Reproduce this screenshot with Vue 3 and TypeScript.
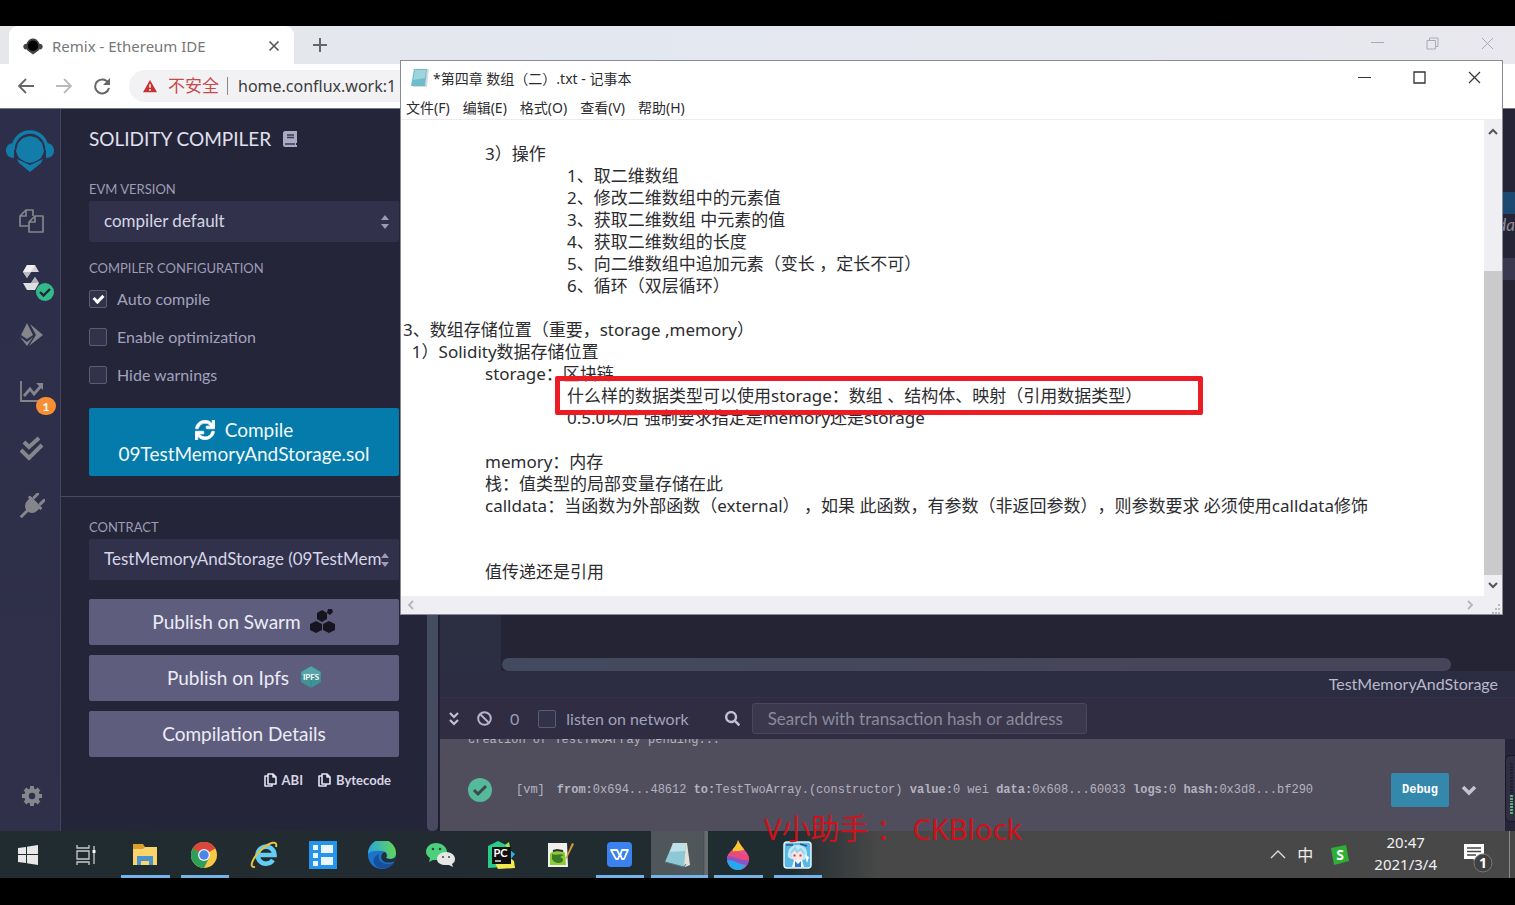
<script setup lang="ts">
import { ref } from 'vue'

interface CompilerOption { id: string; label: string; on: boolean }
interface TaskItem { id: string; label: string; open?: boolean; active?: boolean }
interface LogPart { key: string; value: string }

const options = ref<CompilerOption[]>([
  { id: 'auto', label: 'Auto compile', on: true },
  { id: 'optimize', label: 'Enable optimization', on: false },
  { id: 'hide', label: 'Hide warnings', on: false },
])

const evm = ref('compiler default')
const contract = ref('TestMemoryAndStorage (09TestMemoryAndStorage.sol)')
const url = ref('home.conflux.work:1')
const listen = ref(false)
const query = ref('')

const log: LogPart[] = [
  { key: 'from:', value: '0x694...48612' },
  { key: 'to:', value: 'TestTwoArray.(constructor)' },
  { key: 'value:', value: '0 wei' },
  { key: 'data:', value: '0x608...60033' },
  { key: 'logs:', value: '0' },
  { key: 'hash:', value: '0x3d8...bf290' },
]

const menus = ['文件(F)', '编辑(E)', '格式(O)', '查看(V)', '帮助(H)']

const note = ref([
  '',
  '\t3）操作',
  '\t\t1、取二维数组',
  '\t\t2、修改二维数组中的元素值',
  '\t\t3、获取二维数组 中元素的值',
  '\t\t4、获取二维数组的长度',
  '\t\t5、向二维数组中追加元素（变长 ，定长不可）',
  '\t\t6、循环（双层循环）',
  '',
  '3、数组存储位置（重要，storage ,memory）',
  '  1）Solidity数据存储位置',
  '\tstorage：区块链',
  '\t\t什么样的数据类型可以使用storage：数组 、结构体、映射（引用数据类型）',
  '\t\t0.5.0以后 强制要求指定是memory还是storage',
  '',
  '\tmemory：内存',
  '\t栈：值类型的局部变量存储在此',
  '\tcalldata：当函数为外部函数（external） ，如果 此函数，有参数（非返回参数），则参数要求 必须使用calldata修饰',
  '',
  '',
  '\t值传递还是引用',
].join('\n'))

const tasks: TaskItem[] = [
  { id: 'start', label: '开始' },
  { id: 'view', label: '任务视图' },
  { id: 'files', label: '文件资源管理器', open: true },
  { id: 'chrome', label: 'Chrome', open: true },
  { id: 'ie', label: 'Internet Explorer' },
  { id: 'tiles', label: '控制台' },
  { id: 'edge', label: 'Edge' },
  { id: 'wechat', label: '微信' },
  { id: 'pycharm', label: 'PyCharm' },
  { id: 'npp', label: 'Notepad++' },
  { id: 'wps', label: 'WPS', open: true },
  { id: 'notepad', label: '记事本', open: true, active: true },
  { id: 'paint', label: '画图', open: true },
  { id: 'avatar', label: '直播', open: true },
]
</script>

<template>
  <div class="stage">
    <div class="desktop">
      <header class="tabs">
        <div class="tab">
          <svg class="tab-logo" viewBox="0 0 48 42" aria-hidden="true">
            <path d="M8 14C12 4 19 1 24 1s12 3 16 13c5 0 8 3 8 7s-3 8-8 7c-1 2-3 3-4 4L24 41 12 32c-1-1-3-2-4-4-5 1-8-3-8-7s3-7 8-7z" fill="#444" />
            <circle cx="24" cy="19" r="13" fill="#000" />
          </svg>
          <span class="tab-title">Remix - Ethereum IDE</span>
          <button class="bare" aria-label="关闭标签页">
            <svg width="12" height="12" viewBox="0 0 12 12"><path d="M1.500 1.500l9 9M10.500 1.500l-9 9" stroke="#555" stroke-width="1.600" /></svg>
          </button>
        </div>
        <button class="bare new-tab" aria-label="新标签页">
          <svg width="16" height="16" viewBox="0 0 16 16"><path d="M8 1v14M1 8h14" stroke="#666" stroke-width="2" /></svg>
        </button>
        <div class="win-buttons pale">
          <button class="bare" aria-label="最小化"><svg width="13" height="13" viewBox="0 0 13 13"><path d="M0 5.500h13" stroke="currentColor" /></svg></button>
          <button class="bare" aria-label="还原"><svg width="13" height="13" viewBox="0 0 13 13" fill="none" stroke="currentColor"><path d="M1 3.500h8.500V12H1zM3.500 3V1H12v8.500H9.500" /></svg></button>
          <button class="bare" aria-label="关闭"><svg width="13" height="13" viewBox="0 0 13 13"><path d="M1 1l11 11M12 1L1 12" stroke="currentColor" /></svg></button>
        </div>
      </header>

      <div class="address">
        <button class="bare" aria-label="后退"><svg width="18" height="18" viewBox="0 0 18 18" fill="none" stroke="#666" stroke-width="1.800"><path d="M17 9H2M9 2L2 9l7 7" /></svg></button>
        <button class="bare" aria-label="前进"><svg width="18" height="18" viewBox="0 0 18 18" fill="none" stroke="#bbb" stroke-width="1.800"><path d="M1 9h15M9 2l7 7-7 7" /></svg></button>
        <button class="bare" aria-label="刷新"><svg width="18" height="18" viewBox="0 0 18 18"><path d="M15 5.500A7 7 0 1 0 16 11" fill="none" stroke="#666" stroke-width="2" /><path d="M17 1v7h-7z" fill="#666" /></svg></button>
        <div class="pill">
          <svg width="14" height="14" viewBox="0 0 16 14"><path d="M8 0l8 14H0z" fill="#c9302f" /><path d="M8 5v4M8 10.500v2" stroke="#fff" stroke-width="1.800" /></svg>
          <span class="unsafe">不安全</span>
          <input v-model="url" class="url" aria-label="地址" />
        </div>
      </div>

      <main class="remix">
        <nav class="rail" aria-label="Plugins">
          <button class="bare rail-logo" aria-label="Home">
            <svg width="48" height="42" viewBox="0 0 48 42">
              <path d="M7 20C7 10 14 2 24 2s17 8 17 18" fill="none" stroke="#127da9" stroke-width="3.500" />
              <path d="M8 13v15C3 28 0 25 0 20.500S3 13 8 13zM40 13v15c5 0 8-3 8-7.500S45 13 40 13z" fill="#127da9" />
              <path d="M24 6l4 1 3 1 3 3 2 2 1 4 1 4-1 3-2 4-3 2-4 2-4 1-4-1-4-2-3-2-2-4-1-3 1-4 1-4 2-2 3-3 3-1z" fill="#127da9" />
              <path d="M11 29l13 6 13-6-2 4-11 9-11-9z" fill="#127da9" />
            </svg>
          </button>
          <button class="bare slot" aria-label="Files">
            <svg width="26" height="26" viewBox="0 0 26 26" fill="none" stroke="#85858c" stroke-width="1.700" stroke-linejoin="round"><path d="M10 18H1V8l6-6h7v6M7 2v6H1M10 14l6-6h8v16H10zM16 8v6h-6" /></svg>
          </button>
          <button class="bare slot" aria-label="Compiler">
            <svg width="26" height="26" viewBox="0 0 26 26">
              <path d="M8 0h8l4 7h-8l-4 6-4-6z" fill="#d2d2d8" /><path d="M8 0h8l-4 7H4z" fill="#efeff2" /><path d="M4 7h8l-4 6z" fill="#b9b9c2" />
              <path d="M16 25H8l-4-7h8l4-6 4 6z" fill="#dedee3" /><path d="M12 18h8l-4-6z" fill="#b0b0ba" />
            </svg>
            <span class="badge ok"><svg width="12" height="10" viewBox="0 0 12 10"><path d="M1 5l3.500 3.500L11 2" fill="none" stroke="#23243a" stroke-width="2.400" /></svg></span>
          </button>
          <button class="bare slot" aria-label="Deploy">
            <svg width="26" height="26" viewBox="0 0 26 26" fill="#85858c"><path d="M8 1l6 12-6 4-6-4zM1 15l7 5 6-5-6 9zM11 2l13 11-14 11 7-11z" /></svg>
          </button>
          <button class="bare slot" aria-label="Analysis">
            <svg width="26" height="26" viewBox="0 0 26 26" fill="none" stroke="#85858c"><path d="M2 2v20h22" stroke-width="1.800" /><path d="M5 17l6-7 4 5 7-8" stroke-width="2.800" /><path d="M17 4h7v7z" fill="#85858c" stroke="none" /></svg>
            <span class="badge warn">1</span>
          </button>
          <button class="bare slot" aria-label="Unit tests">
            <svg width="26" height="26" viewBox="0 0 26 26" fill="none" stroke="#85858c" stroke-width="4"><path d="M5 6l5 5L20 2M2 14l8 8L23 9" /></svg>
          </button>
          <button class="bare slot" aria-label="Plugin manager">
            <svg width="26" height="26" viewBox="0 0 26 26"><g transform="rotate(45 13 13)" fill="#85858c"><rect x="7" y="-1" width="3" height="8" rx="1.500" /><rect x="16" y="-1" width="3" height="8" rx="1.500" /><rect x="4" y="7" width="18" height="3" rx="1" /><path d="M6 9h14v4a7 7 0 0 1-14 0z" /><rect x="11.500" y="19" width="3" height="10" /></g></svg>
          </button>
          <button class="bare slot gear" aria-label="Settings">
            <svg width="22" height="22" viewBox="0 0 22 22" fill="none" stroke="#85858c"><circle cx="11" cy="11" r="5.500" stroke-width="4.500" /><path d="M11 1v4M11 17v4M1 11h4M17 11h4M4 4l3 3M15 15l3 3M4 18l3-3M15 7l3-3" stroke-width="4" /></svg>
          </button>
        </nav>

        <section class="panel">
          <h1 class="title">SOLIDITY COMPILER
            <svg width="14" height="16" viewBox="0 0 14 16"><path d="M2 0h12v12h-1v2h1v2H2c-1 0-2-1-2-2V2c0-1 1-2 2-2z" fill="#aaaac6" /><path d="M4 4h7M4 6.500h7M2 13h10" stroke="#3a3a52" stroke-width="1.300" /></svg>
          </h1>
          <label class="caption first" for="evm">EVM VERSION</label>
          <div class="select-wrap">
            <select id="evm" v-model="evm"><option>compiler default</option></select>
            <svg class="arrows" width="8" height="14" viewBox="0 0 8 14"><path d="M4 0l4 5H0zM4 14l4-5H0z" fill="#9a9ab4" /></svg>
          </div>
          <div class="caption second">COMPILER CONFIGURATION</div>
          <div class="checks">
            <label v-for="o in options" :key="o.id" class="check"><input v-model="o.on" type="checkbox" class="tick" />{{ o.label }}</label>
          </div>
          <button class="compile">
            <span class="compile-top">
              <svg width="20" height="20" viewBox="0 0 512 512"><path fill="#fff" d="M440.650 12.570l4 82.770A247.160 247.160 0 0 0 255.830 8C134.730 8 33.910 94.920 12.290 209.820A12 12 0 0 0 24.090 224h49.050a12 12 0 0 0 11.670-9.260 175.910 175.910 0 0 1 317-56.940l-101.460-4.860a12 12 0 0 0-12.570 12v47.410a12 12 0 0 0 12 12H500a12 12 0 0 0 12-12V12a12 12 0 0 0-12-12h-47.370a12 12 0 0 0-11.980 12.570zM255.830 432a175.610 175.610 0 0 1-146-77.800l101.800 4.870a12 12 0 0 0 12.570-12v-47.400a12 12 0 0 0-12-12H12a12 12 0 0 0-12 12V500a12 12 0 0 0 12 12h47.350a12 12 0 0 0 12-12.600l-4.150-82.570A247.170 247.170 0 0 0 255.830 504c121.110 0 221.930-86.920 243.550-201.820a12 12 0 0 0-11.800-14.180h-49.050a12 12 0 0 0-11.670 9.260A175.860 175.860 0 0 1 255.830 432z" stroke="#fff" stroke-width="18" /></svg>
              Compile
            </span>
            <span>09TestMemoryAndStorage.sol</span>
          </button>
          <hr class="rule" />
          <label class="caption" for="contract">CONTRACT</label>
          <div class="select-wrap">
            <select id="contract" v-model="contract"><option>TestMemoryAndStorage (09TestMemoryAndStorage.sol)</option></select>
            <svg class="arrows" width="8" height="14" viewBox="0 0 8 14"><path d="M4 0l4 5H0zM4 14l4-5H0z" fill="#9a9ab4" /></svg>
          </div>
          <div class="actions">
            <button class="action">Publish on Swarm
              <svg width="26" height="24" viewBox="0 0 26 24" fill="#15141f"><path d="M12 1l5 3v6l-5 3-5-3V4zM6 12l6 3v6l-6 3-6-3v-6zM19 12l6 3v6l-6 3-6-3v-6zM18 0l4-0 1 3-3 3-3-2z" /></svg>
            </button>
            <button class="action">Publish on Ipfs
              <svg class="ipfs" width="20" height="22" viewBox="0 0 20 22"><path d="M10 0l10 6v10l-10 6L0 16V6z" fill="#3f9296" /><path d="M10 14v8M10 0L0 6v4h20V6z" fill="#57a5a8" stroke="#2d7b80" stroke-width=".5" /><text x="10" y="14" text-anchor="middle" font-size="8" font-weight="700" font-family="Lato" fill="#fff">IPFS</text></svg>
            </button>
            <button class="action">Compilation Details</button>
          </div>
          <div class="copies">
            <button v-for="c in ['ABI', 'Bytecode']" :key="c" class="bare copy">
              <svg width="13" height="14" viewBox="0 0 13 14" fill="none" stroke="#e4e4f0" stroke-width="1.600" stroke-linejoin="round"><path d="M4 3H1v10h7v-2M4 1h5l3 3v7H4zM9 1v3h3" /></svg>{{ c }}
            </button>
          </div>
        </section>
        <div class="divider"><i class="divider-thumb"></i></div>

        <section class="workspace">
          <div class="editor">
            <div class="editor-tabs"></div>
            <div class="line-hit"></div>
            <div class="line-text">da</div>
            <div class="line-band"></div>
            <div class="code"><div class="code-view"></div></div>
          </div>
          <div class="hscroll"><i></i></div>
          <div class="context">TestMemoryAndStorage</div>
          <div class="term-bar">
            <button class="bare" aria-label="Collapse"><svg width="10" height="14" viewBox="0 0 10 14" fill="none" stroke="#c0c0d4" stroke-width="2.200"><path d="M1 1l4 4 4-4M1 8l4 4 4-4" /></svg></button>
            <button class="bare ban" aria-label="Clear"><svg width="15" height="15" viewBox="0 0 15 15" fill="none" stroke="#b4b4ca" stroke-width="2"><circle cx="7.500" cy="7.500" r="6.300" /><path d="M3 3l9 9" /></svg></button>
            <span class="count">0</span>
            <label class="check listen"><input v-model="listen" type="checkbox" class="tick" />listen on network</label>
            <svg width="15" height="15" viewBox="0 0 512 512"><path fill="#c0c0d4" d="M505 442.700L405.300 343c-4.500-4.500-10.600-7-17-7H372c27.600-35.300 44-79.700 44-128C416 93.100 322.900 0 208 0S0 93.100 0 208s93.100 208 208 208c48.300 0 92.700-16.400 128-44v16.300c0 6.400 2.500 12.500 7 17l99.700 99.700c9.400 9.400 24.600 9.400 33.900 0l28.300-28.300c9.400-9.400 9.400-24.600.1-34zM208 336c-70.700 0-128-57.200-128-128 0-70.700 57.200-128 128-128 70.700 0 128 57.200 128 128 0 70.700-57.200 128-128 128z" /></svg>
            <input v-model="query" class="search" type="text" placeholder="Search with transaction hash or address" aria-label="Search transactions" />
          </div>
          <div class="term-row">
            <div class="terminal">
              <div class="pending"><span>creation of TestTwoArray pending...</span></div>
              <div class="entry">
                <span class="ok-dot"><svg width="16" height="14" viewBox="0 0 16 14"><path d="M2 7l4 4 8-8" fill="none" stroke="#3c4a4d" stroke-width="3" /></svg></span>
                <p class="entry-text"><b class="vm">[vm]</b><template v-for="p in log" :key="p.key"><b>{{ p.key }}</b>{{ p.value + ' ' }}</template></p>
                <button class="debug">Debug</button>
                <button class="bare" aria-label="Expand"><svg width="16" height="11" viewBox="0 0 16 11"><path d="M2 2l6 6 6-6" fill="none" stroke="#c4c2d4" stroke-width="3.600" /></svg></button>
              </div>
            </div>
            <div class="meter"><i v-for="n in 18" :key="n" :class="{ lit: n > 11 }"></i></div>
          </div>
        </section>
      </main>

      <footer class="taskbar">
        <nav class="apps" aria-label="任务栏">
          <button v-for="t in tasks" :key="t.id" class="app" :class="{ open: t.open, active: t.active }" :aria-label="t.label">
            <svg v-if="t.id === 'start'" width="20" height="20" viewBox="0 0 20 20" fill="#e8e8e8"><path d="M0 3l8-1v7H0zM9 1.800L20 0v9H9zM0 10h8v8l-8-1zM9 10h11v10L9 18.300z" /></svg>
            <svg v-else-if="t.id === 'view'" width="20" height="20" viewBox="0 0 20 20" fill="none" stroke="#c8cccc" stroke-width="1.300"><path d="M1 0v3h12V0M1 20v-3h12v3M1 6h12v8H1zM18 1v18" /><path d="M18 5v3" stroke="#fff" stroke-width="3" /></svg>
            <svg v-else-if="t.id === 'files'" width="26" height="22" viewBox="0 0 26 22"><path d="M1 0h10l2 3h12v18H1z" fill="#d9a02b" /><path d="M1 5h10l2-2h12v18H1z" fill="#fbd56b" /><path d="M5 21v-9h16v9h-4v-4H9v4z" fill="#4a93cc" /></svg>
            <svg v-else-if="t.id === 'chrome'" width="26" height="26" viewBox="0 0 26 26"><circle cx="13" cy="13" r="13" fill="#f6c945" /><path d="M13 13L1.700 6.500A13 13 0 0 1 24.300 6.500z" fill="#d8483b" /><path d="M13 13V7h11.500A13 13 0 0 0 1.700 6.500z" fill="#d8483b" /><path d="M1.700 6.500A13 13 0 0 0 13 26l5-10-5-3z" fill="#2f9f57" /><circle cx="13" cy="13" r="6" fill="#f1f1f1" /><circle cx="13" cy="13" r="4.700" fill="#4a86e8" /></svg>
            <svg v-else-if="t.id === 'ie'" width="28" height="28" viewBox="0 0 28 28" fill="none"><path d="M23 19a8.500 8.500 0 1 1 1.500-5H9" stroke="#63cdf3" stroke-width="4.600" /><path d="M5 26C-2 27 3 16 12 8 20 1 28-1 26 6" stroke="#e6c43c" stroke-width="2" /></svg>
            <svg v-else-if="t.id === 'tiles'" width="28" height="28" viewBox="0 0 28 28"><path d="M0 0h28v28H0z" fill="#2594ee" /><path d="M4 4h5v5H4zM12 4h12v8H12zM4 12h5v5H4zM12 16h12v8H12zM4 20h5v5H4z" fill="#eaf5ff" /></svg>
            <svg v-else-if="t.id === 'edge'" width="28" height="28" viewBox="0 0 28 28"><defs><linearGradient id="edge-top"><stop stop-color="#2aa6dc" /><stop offset="1" stop-color="#62d855" /></linearGradient></defs><circle cx="14" cy="14" r="14" fill="#1b74c9" /><path d="M0 13A14 14 0 0 1 28 12c0 5-5 7-10 5 3-2 1-7-5-7C7 9 2 10 0 13z" fill="url(#edge-top)" /><path d="M11 13c-2 7 4 12 15 9-5 6-14 8-19 2-3-4-1-9 4-11z" fill="#164f9b" /><path d="M17 11c-4 1-5 6-2 9 3 2 8 2 12 0l1-4c-3 3-8 2-10 1 1-2 1-4-1-6z" fill="#22303a" /></svg>
            <svg v-else-if="t.id === 'wechat'" width="30" height="24" viewBox="0 0 30 24"><path d="M10 0c6 0 11 4 11 9s-5 8-11 8l-3 0-4 2 1-4C1 13 0 11 0 9c0-5 4-9 10-9z" fill="#4cd07c" /><path d="M20 9c5 0 9 3 9 7 0 2-1 4-3 5l1 3-4-2h-3c-5 0-9-2-9-6s4-7 9-7z" fill="#e6e6e6" /><g fill="#27503c"><circle cx="7" cy="6" r="1.300" /><circle cx="14" cy="6" r="1.300" /><circle cx="17" cy="14" r="1" /><circle cx="23" cy="14" r="1" /></g></svg>
            <svg v-else-if="t.id === 'pycharm'" width="28" height="28" viewBox="0 0 28 28"><path d="M1 5l10-5 8 4-2 22-16 1z" fill="#2bcb8c" /><path d="M18 4l4-3 1 5-3 1z" fill="#a7e34c" /><path d="M23 9l5 4-5 6z" fill="#27b4e6" /><path d="M22 16l5 4 1 7-17 1-3-6z" fill="#f2e94c" /><path d="M5 6h19v17H5z" fill="#111" /><text x="6.500" y="16" font-size="11" font-weight="700" font-family="Lato" fill="#fff">PC</text><path d="M8 20h6" stroke="#fff" stroke-width="1.300" /></svg>
            <svg v-else-if="t.id === 'npp'" width="28" height="26" viewBox="0 0 28 26"><path d="M2 1h19l1 24H2z" fill="#f1f1ec" /><path d="M4 12c4-5 11-6 15-1l1 12H4z" fill="#8bcc3a" /><path d="M6 12c4 2 8-1 12 1l-4 2c3 1 4 3 2 5-3 2-8 1-10-3z" fill="#3d7a23" /><path d="M7 9l4-1 6 1" stroke="#333" stroke-width="2" fill="none" /><path d="M26 1l-6 14-1 3 2-2L28 2z" fill="#d89a34" /></svg>
            <svg v-else-if="t.id === 'wps'" width="25" height="25" viewBox="0 0 25 25"><rect width="25" height="25" rx="4" fill="#3b82f0" /><path d="M4 8h6l3 6 2-6h6l-4 9h-2l-2-5-2 5H9z" fill="none" stroke="#fff" stroke-width="1.800" stroke-linejoin="round" /></svg>
            <svg v-else-if="t.id === 'notepad'" width="28" height="26" viewBox="0 0 28 26"><path d="M9 1h14l3 22-5 2z" fill="#e3e0d6" /><path d="M9 1h13l-2 24L1 20z" fill="#8ec8d6" /><path d="M9 1h13l-1 8-15 1z" fill="#bfe0e6" /><path d="M1 20l19 5 2-3" fill="none" stroke="#4c7580" /></svg>
            <svg v-else-if="t.id === 'paint'" width="24" height="30" viewBox="0 0 24 30"><defs><clipPath id="drop"><path d="M12 0c3 8 11 12 11 19a11 11 0 0 1-22 0C1 12 11 8 12 0z" /></clipPath></defs><g clip-path="url(#drop)"><path d="M0 0h24v30H0z" fill="#e84f96" /><path d="M6 0h12v10L7 12z" fill="#f9c62c" /><path d="M0 12l10-1c5 2 9 5 14 4v5C14 21 9 14 0 18z" fill="#e94a77" /><path d="M0 17c8-3 14 5 24 3v5C15 26 9 19 0 22z" fill="#8b53c6" /><path d="M0 21c7-3 12 4 20 4l-5 5H0z" fill="#25a9ee" /></g></svg>
            <svg v-else width="29" height="28" viewBox="0 0 29 28"><rect x="1" y="1" width="27" height="26" rx="3" fill="#58b9e6" stroke="#e3f5fd" stroke-width="1.500" /><path d="M5 16C4 7 9 4 15 4s10 4 9 12l-3 3-13-1z" fill="#bce9f8" /><path d="M9 12c2-3 9-3 11 0v5c-2 4-9 4-11 0z" fill="#fbe5df" /><path d="M8 12l4-5 2 4 4-3 3 5" fill="none" stroke="#8fd3ef" stroke-width="2" /><path d="M11.500 13.500v2M17.500 13.500v2" stroke="#b8365b" stroke-width="2" /><path d="M9 26l2-7h8l2 7z" fill="#f5fbff" /><path d="M12 20l3 3 3-3v6h-6z" fill="#3976c8" /><path d="M22 14l4 2-2 6z" fill="#fff" /><path d="M3 4h7M17 3l7 2" stroke="#31527e" stroke-width="1.500" /></svg>
          </button>
        </nav>
        <div class="tray">
          <button class="bare" aria-label="显示隐藏的图标"><svg width="16" height="9" viewBox="0 0 16 9"><path d="M1 8l7-7 7 7" fill="none" stroke="#ddd" stroke-width="1.400" /></svg></button>
          <span class="ime">中</span>
          <svg width="20" height="20" viewBox="0 0 20 20"><path d="M1 3l15-3 3 16-15 4z" fill="#2fae35" /><text x="10" y="15" text-anchor="middle" font-size="14" font-weight="700" font-family="Open Sans" fill="#fff">S</text></svg>
          <time class="clock"><span>20:47</span><span>2021/3/4</span></time>
          <button class="bare notice" aria-label="通知">
            <svg width="30" height="30" viewBox="0 0 30 30"><path d="M1 1h20v15h-5v5l-6-5H1z" fill="#fff" /><path d="M4 5h14M4 8.500h14M4 12h9" stroke="#484848" stroke-width="1.300" /><circle cx="20" cy="20" r="9" fill="#404040" stroke="#777" /><text x="20" y="25" text-anchor="middle" font-size="14" font-weight="700" font-family="Noto Sans" fill="#fff">1</text></svg>
          </button>
        </div>
      </footer>

      <section class="notepad">
        <header class="np-title">
          <svg width="20" height="20" viewBox="0 0 20 20"><path d="M4 1h15l-2 18H3z" fill="#d8dcd8" /><path d="M4 1h13l-2 17H1z" fill="#6fbccb" /><path d="M5 2h11l-1 8-12 2z" fill="#9dd5dd" /></svg>
          <span class="np-name">*第四章 数组（二）.txt - 记事本</span>
          <div class="win-buttons">
            <button class="bare" aria-label="最小化"><svg width="13" height="13" viewBox="0 0 13 13"><path d="M0 6.500h13" stroke="currentColor" /></svg></button>
            <button class="bare" aria-label="最大化"><svg width="13" height="13" viewBox="0 0 13 13"><path d="M1 1h11v11H1z" fill="none" stroke="currentColor" stroke-width="1.300" /></svg></button>
            <button class="bare" aria-label="关闭"><svg width="13" height="13" viewBox="0 0 13 13"><path d="M1 1l11 11M12 1L1 12" stroke="currentColor" stroke-width="1.200" /></svg></button>
          </div>
        </header>
        <nav class="np-menu"><button v-for="m in menus" :key="m" class="bare">{{ m }}</button></nav>
        <div class="np-body">
          <textarea v-model="note" class="np-text" wrap="off" spellcheck="false" aria-label="文本编辑器"></textarea>
          <div class="vbar">
            <svg width="10" height="7" viewBox="0 0 10 7"><path d="M1 6l4-4 4 4" fill="none" stroke="#555" stroke-width="2" /></svg>
            <i class="vthumb"></i>
            <svg width="10" height="7" viewBox="0 0 10 7"><path d="M1 1l4 4 4-4" fill="none" stroke="#555" stroke-width="2" /></svg>
          </div>
        </div>
        <div class="hbar">
          <svg width="7" height="10" viewBox="0 0 7 10"><path d="M6 1L2 5l4 4" fill="none" stroke="#b5b5b8" stroke-width="1.800" /></svg>
          <svg class="right" width="7" height="10" viewBox="0 0 7 10"><path d="M1 1l4 4-4 4" fill="none" stroke="#b5b5b8" stroke-width="1.800" /></svg>
          <svg width="10" height="10" viewBox="0 0 10 10" fill="#bbb"><path d="M7 0h2v2H7zM7 4h2v2H7zM7 8h2v2H7zM4 4h2v2H4zM4 8h2v2H4zM1 8h2v2H1z" /></svg>
        </div>
      </section>
      <div class="marker"></div>
      <div class="watermark">V小助手 ： CKBlock</div>
    </div>
  </div>
</template>

<style>
body { margin: 0; background: #000; }
</style>

<style scoped>
* { box-sizing: border-box; }
.stage {
  min-height: 100vh;
  padding: 26px 0 27px;
  background: #000;
  display: flex;
  flex-direction: column;
  font-family: "Noto Sans", "Noto Sans CJK SC", sans-serif;
}
.desktop { position: relative; flex: 1; display: flex; flex-direction: column; overflow: hidden; }
button, input, select, textarea { font: inherit; color: inherit; margin: 0; }
svg { flex: none; display: block; }
.bare { border: 0; padding: 0; background: none; display: flex; align-items: center; justify-content: center; }

.tabs { height: 38px; display: flex; align-items: center; background: linear-gradient(90deg, #e6e7e9, #e3e7f0 40%, #e8e8ee); }
.tab { align-self: stretch; width: 285px; margin-left: 9px; padding: 2px 14px 0; display: flex; align-items: center; gap: 9px; background: #fff; border-radius: 9px 9px 0 0; }
.tab-logo { width: 20px; height: 17px; }
.tab-title { flex: 1; font-size: 15px; color: #77777a; white-space: nowrap; }
.new-tab { margin-left: 18px; }
.win-buttons { margin-left: auto; display: flex; gap: 42px; color: #333; }
.tabs .win-buttons { margin-right: 21px; padding-bottom: 4px; }
.pale { color: #aaaab4; }

.address { height: 45px; padding-left: 17px; display: flex; align-items: center; gap: 20px; background: #fff; border-bottom: 1px solid #77777f; }
.pill { flex: 1; height: 32px; padding-left: 14px; display: flex; align-items: center; background: #f2f2f4; border-radius: 16px; margin: 0 20px 0 -2px; }
.unsafe { margin-left: 11px; padding-right: 8px; font-size: 17px; line-height: 18px; color: #c9484a; border-right: 1px solid #888; }
.url { flex: 1; min-width: 0; padding: 0 0 0 10px; border: 0; background: none; font-size: 16px; color: #3c3c40; }

.remix { flex: 1; display: flex; background: #252539; font-family: Lato, "Noto Sans", sans-serif; color: #d8d8e6; }
.rail { width: 61px; padding-bottom: 7px; display: flex; flex-direction: column; align-items: center; background: linear-gradient(#2d2e49, #30304b); border-right: 1px solid #44445c; }
.rail-logo { height: 83px; }
.slot { position: relative; width: 56px; height: 57px; padding-left: 3px; }
.gear { margin-top: auto; }
.badge { position: absolute; left: 34px; top: 34px; height: 18px; min-width: 18px; border-radius: 9px; display: flex; align-items: center; justify-content: center; font-size: 12px; font-weight: 700; color: #fff; }
.ok { background: #32ba89; }
.warn { width: 20px; background: #f98f35; }

.panel { width: 366px; padding: 19px 28px 0; }
.title { margin: 0; display: flex; align-items: center; gap: 12px; font-size: 19px; font-weight: 400; line-height: 22px; color: #e0e0ee; }
.caption { display: block; margin-top: 21px; font-size: 13px; line-height: 18px; color: #9c9cb6; }
.first { margin-top: 30px; }
.second { margin-top: 17px; }
.select-wrap { position: relative; margin-top: 3px; }
select { appearance: none; width: 100%; height: 41px; padding: 0 17px 2px 15px; border: 0; border-radius: 2px; background: #31314b; font-size: 17px; color: #d6d6e6; }
.arrows { position: absolute; right: 10px; top: 14px; }
.checks { margin-top: 13px; display: flex; flex-direction: column; gap: 20px; }
.check { display: flex; align-items: center; gap: 10px; font-size: 16px; line-height: 18px; color: #a2a2bc; }
.tick { appearance: none; width: 18px; height: 18px; border: 1px solid #5b5b74; border-radius: 2px; background: #32324a; display: grid; place-items: center; }
.tick:checked::after { content: ""; width: 4px; height: 7px; border: solid #fff; border-width: 0 3px 3px 0; transform: rotate(45deg); margin-bottom: 2px; }
.compile { margin-top: 24px; width: 100%; height: 68px; padding: 0; border: 0; border-radius: 2px; background: #047bab; color: #f2f8fc; font-size: 19px; line-height: 24px; display: flex; flex-direction: column; align-items: center; justify-content: center; }
.compile-top { display: flex; align-items: center; gap: 10px; }
.rule { margin: 20px -28px 0; border: 0; height: 1px; background: #4a4a60; }
.actions { margin-top: 19px; display: flex; flex-direction: column; gap: 10px; }
.action { height: 46px; padding: 0 0 2px; border: 0; border-radius: 2px; background: #5f5d7e; color: #ececf6; font-size: 19px; display: flex; align-items: center; justify-content: center; gap: 9px; }
.ipfs { margin-left: 3px; }
.copies { margin-top: 14px; padding-right: 8px; display: flex; justify-content: flex-end; gap: 15px; }
.copy { gap: 5px; font-size: 13px; line-height: 18px; font-weight: 700; color: #d6d6e4; }
.divider { width: 13px; display: flex; border-right: 2px solid #1f1f31; }
.divider-thumb { flex: 1; background: linear-gradient(#444c62 80%, #4a4860); border-radius: 5px; }

.workspace { flex: 1; min-width: 0; display: flex; flex-direction: column; background: #2c2d42; }
.editor { flex: 1; display: flex; flex-direction: column; background: #252437; }
.editor-tabs { height: 83px; }
.line-hit { height: 22px; background: #1c4972; }
.line-text { height: 44px; line-height: 22px; text-align: right; font-size: 17px; font-style: italic; color: #8c8c9c; }
.line-band { height: 22px; background: #3b3950; }
.code { flex: 1; display: flex; background: #2c2e42; }
.code-view { flex: 1; margin-left: 61px; background: #242435; }
.hscroll { height: 13px; padding: 0 64px 0 62px; background: linear-gradient(90deg, #2c2e42 61px, #242435 61px); display: flex; }
.hscroll i { flex: 1; border-radius: 7px; background: linear-gradient(90deg, #434a5f, #474559 70%); }
.context { height: 27px; padding-right: 17px; text-align: right; font-size: 16px; line-height: 25px; color: #b9b9ca; border-bottom: 1px solid #33344a; }
.term-bar { height: 41px; padding-left: 9px; display: flex; align-items: center; background: #302d43; }
.ban { margin-left: 18px; }
.count { margin-left: 18px; font-size: 16px; color: #9c9cb2; }
.listen { margin: 0 36px 0 19px; }
.search { width: 335px; height: 31px; margin-left: 12px; padding: 0 15px; border: 1px solid #4a465b; border-radius: 3px; background: #3b384d; font-size: 17px; color: #ddd; }
.search::placeholder { color: #8b8a99; opacity: 1; }
.term-row { display: flex; height: 92px; background: #252439; }
.terminal { flex: 1; min-width: 0; background: #504e5c; font-family: "Liberation Mono", monospace; font-size: 12px; color: #b5b2c0; }
.pending { height: 8px; padding-left: 28px; overflow: hidden; display: flex; align-items: flex-end; line-height: 14px; }
.entry { padding: 26px 28px 0; display: flex; align-items: center; gap: 12px; }
.ok-dot { width: 24px; height: 24px; border-radius: 12px; background: #55b99b; display: grid; place-items: center; }
.entry-text { flex: 1; margin: 0 0 0 12px; white-space: pre; }
.vm { margin-right: 12px; font-weight: 400; }
.debug { width: 58px; height: 34px; padding: 0; border: 0; border-radius: 2px; background: #3488ab; color: #fff; font-weight: 700; }
.meter { width: 10px; height: 67px; margin-top: 16px; padding: 7px 2px 7px 4px; background: #302e43; border: 1px solid #171725; border-right: 0; border-radius: 5px 0 0 5px; display: flex; flex-direction: column; gap: 1px; }
.meter i { height: 2px; background: #202030; }
.meter .lit { background: #5fae7c; }

.taskbar { height: 47px; display: flex; justify-content: space-between; background: linear-gradient(90deg, #202c2f, #222b31 28%, #1f2d30 52%, #484848 58%); }
.apps { width: 827px; display: grid; grid-template-columns: 56px repeat(13, 1fr); }
.app { position: relative; border: 0; padding: 0; background: none; display: flex; align-items: center; justify-content: center; }
.open::after { content: ""; position: absolute; left: 6px; right: 5px; bottom: 0; height: 3px; background: #73b4ea; }
.active { background: linear-gradient(90deg, #50575a 52px, #3f474a 52px, #666b6d 54px); margin: 0 0 0 2px; padding-right: 4px; }
.active::after { left: 0; right: 0; }
.tray { display: flex; align-items: center; color: #f0f0f0; padding-right: 5px; }
.ime { margin: 0 17px 0 11px; font-size: 16px; line-height: 20px; }
.clock { margin: 0 26px 0 24px; display: flex; flex-direction: column; align-items: center; font-size: 15px; line-height: 22px; padding-bottom: 3px; }
.notice { height: 47px; padding: 6px 16px 0 0; border-right: 1px solid #888; }

.notepad { position: absolute; z-index: 2; left: 400px; right: 12px; top: 34px; display: flex; flex-direction: column; background: #fff; border: 1px solid #8b8b96; color: #2c2c30; }
.np-title { height: 35px; padding: 0 21px 2px 9px; display: flex; align-items: center; gap: 3px; font-size: 14px; }
.np-name { white-space: pre; }
.np-menu { height: 24px; padding: 0 0 2px 5px; display: flex; align-items: center; gap: 13px; font-size: 14px; border-bottom: 1px solid #ececf0; }
.np-body { display: flex; height: 476px; }
.np-text { flex: 1; min-width: 0; padding: 1px 0 0 2px; border: 0; outline: 0; resize: none; overflow: hidden; font-size: 17px; line-height: 22px; tab-size: 82px; white-space: pre; background: #fff; text-spacing-trim: space-all; }
.vbar { width: 18px; padding: 8px 0 7px; display: flex; flex-direction: column; align-items: center; background: #efeff3; }
.vthumb { width: 18px; height: 304px; margin: auto 0 7px; background: #cacacd; }
.hbar { height: 18px; padding: 0 1px 0 6px; display: flex; align-items: center; background: #efeff3; }
.hbar .right { margin: 0 17px 0 auto; }
.hbar svg:last-child { align-self: flex-end; }
.marker { position: absolute; z-index: 3; left: 555px; top: 350px; width: 648px; height: 39px; border: 5px solid #ec1c24; border-radius: 2px; }
.watermark { position: absolute; z-index: 4; left: 764px; bottom: 29px; font-size: 29px; line-height: 40px; white-space: pre; color: #cf1219; }
</style>
